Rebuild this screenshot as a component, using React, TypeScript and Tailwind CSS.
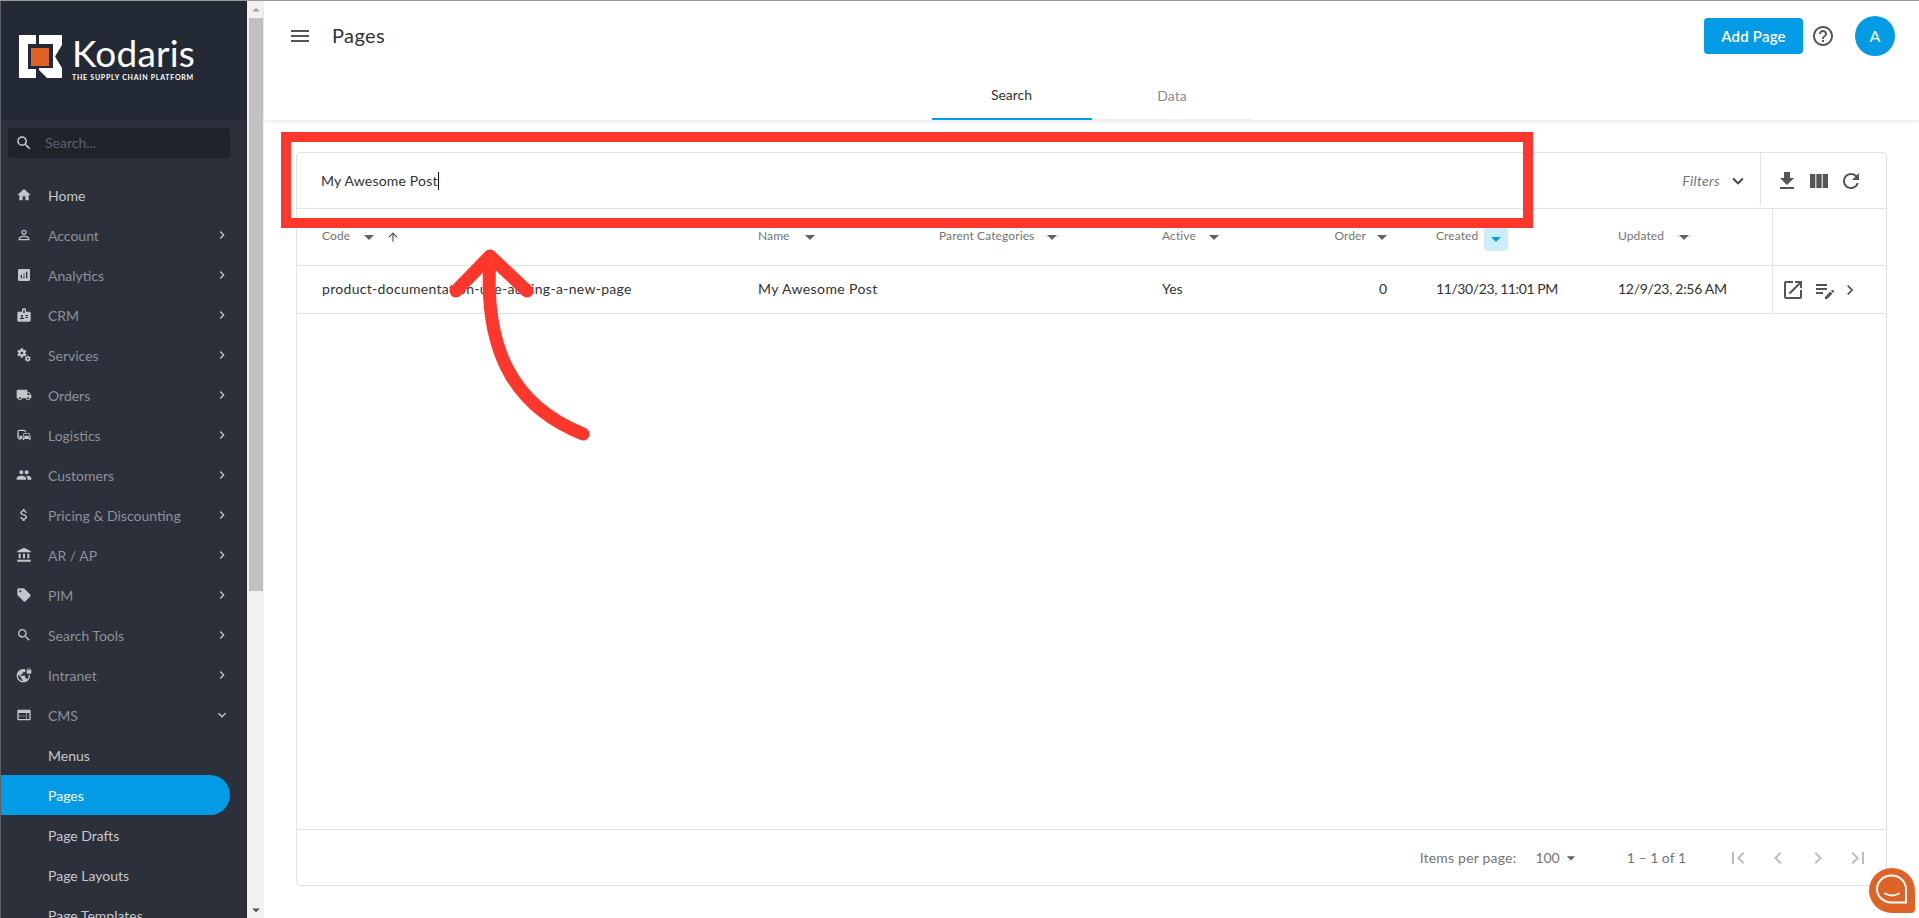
import React from "react";
import {
  MdHome, MdPersonOutline, MdAnalytics, MdBadge, MdMiscellaneousServices, MdLocalShipping, MdCommute, MdPeople,
  MdAttachMoney, MdAccountBalance, MdSell, MdSearch, MdVpnLock, MdWeb, MdChevronRight, MdExpandMore, MdMenu,
  MdHelpOutline, MdFileDownload, MdViewColumn, MdRefresh, MdOpenInNew, MdEditNote, MdArrowUpward, MdArrowDropDown,
  MdFirstPage, MdLastPage, MdChevronLeft, MdArrowDropUp,
} from "react-icons/md";

const items: [string, React.ComponentType<{ size?: number; className?: string }>][] = [
  ["Account", MdPersonOutline],
  ["Analytics", MdAnalytics],
  ["CRM", MdBadge],
  ["Services", MdMiscellaneousServices],
  ["Orders", MdLocalShipping],
  ["Logistics", MdCommute],
  ["Customers", MdPeople],
  ["Pricing & Discounting", MdAttachMoney],
  ["AR / AP", MdAccountBalance],
  ["PIM", MdSell],
  ["Search Tools", MdSearch],
  ["Intranet", MdVpnLock],
];

function Logo() {
  return (
    <div className="flex items-start pl-[18px] pt-[34px] h-[119px] bg-[#242a35] shrink-0">
      <svg width="43" height="43" viewBox="0 0 43 43" className="shrink-0">
        <path d="M0 0H17V9H9V34H17V43H0Z M20 0H43V10L36 21.5L43 33V43H28L20 35V9Z" fill="#fff" />
        <rect x="9" y="9" width="25" height="24" fill="#242a35" />
        <rect x="12" y="13" width="18" height="18" fill="#dd6426" />
      </svg>
      <div className="ml-[10px] flex flex-col text-white">
        <span className="text-[37px] leading-[36px] font-normal tracking-[0.2px]">Kodaris</span>
        <span className="text-[7px] leading-[8px] font-bold tracking-[0.75px] whitespace-nowrap mt-[2px]">THE SUPPLY CHAIN PLATFORM</span>
      </div>
    </div>
  );
}

function NavRow({ label, Icon, open }: { label: string; Icon: React.ComponentType<{ size?: number; className?: string }>; open?: boolean }) {
  return (
    <div className="h-[40px] flex items-center text-[14px] text-[#8d9199]">
      <div className="w-[47px] pl-[15px] shrink-0">
        <Icon size={16} className="text-[#c3c5c9]" />
      </div>
      <span className="flex-1 whitespace-nowrap">{label}</span>
      <div className="pr-[17px]">
        {open ? <MdExpandMore size={16} className="text-[#c3c5c9]" /> : <MdChevronRight size={16} className="text-[#c3c5c9]" />}
      </div>
    </div>
  );
}

function Sidebar() {
  return (
    <aside className="w-[247px] shrink-0 h-full bg-[#2b303b] border-l border-[#5b5f68] overflow-hidden flex flex-col">
      <Logo />
      <div className="ml-[7px] w-[222px] mt-[8px] h-[30px] rounded-[3px] bg-[#1f242c] flex items-center pl-[7px] shrink-0">
        <MdSearch size={18} className="text-[#c9cbce]" />
        <span className="ml-[12px] -mt-[2px] text-[14px] text-[#5d626b]">Search...</span>
      </div>
      <div className="mt-[17px] shrink-0">
        <div className="h-[40px] flex items-center text-[14px] text-[#c6c8cc]">
          <div className="w-[47px] pl-[15px] shrink-0">
            <MdHome size={16} className="text-[#c3c5c9]" />
          </div>
          Home
        </div>
        {items.map(([l, I]) => (
          <NavRow key={l} label={l} Icon={I} />
        ))}
        <NavRow label="CMS" Icon={MdWeb} open />
        <div className="h-[40px] flex items-center pl-[47px] text-[14px] text-[#c6c8cc]">Menus</div>
        <div className="h-[40px] w-[229px] rounded-r-[20px] bg-[#039be5] flex items-center pl-[47px] text-[14px] text-white">Pages</div>
        <div className="h-[40px] flex items-center pl-[47px] text-[14px] text-[#c6c8cc]">Page Drafts</div>
        <div className="h-[40px] flex items-center pl-[47px] text-[14px] text-[#c6c8cc]">Page Layouts</div>
        <div className="h-[40px] flex items-center pl-[47px] text-[14px] text-[#c6c8cc]">Page Templates</div>
      </div>
    </aside>
  );
}

function Scrollbar() {
  return (
    <div className="w-[17px] shrink-0 h-full bg-[#f1f1f1] flex flex-col items-center">
      <div className="h-[17px] flex items-center justify-center"><MdArrowDropUp size={18} className="text-[#a3a3a3]" /></div>
      <div className="w-[14px] h-[573px] bg-[#c1c1c1]" />
      <div className="flex-1" />
      <div className="h-[17px] flex items-center justify-center"><MdArrowDropDown size={18} className="text-[#505050]" /></div>
    </div>
  );
}

function Head({ label, right, gap, children }: { label: string; right?: boolean; gap?: string; children?: React.ReactNode }) {
  return (
    <div className={`flex items-center text-[12px] text-[#757575] tracking-[0.1px] ${right ? "justify-end" : ""}`}>
      <span className="-mt-[2px]">{label}</span>
      {children ?? <MdArrowDropDown size={24} className={`${gap ?? "ml-[8px]"} text-[#616161]`} />}
    </div>
  );
}

const COLS = "grid grid-cols-[461px_181px_223px_138px_136px_182px_154px_1fr]";

function Table() {
  return (
    <>
      <div className={`${COLS} h-[57px] border-b border-[#e3e3e3]`}>
        <div className="pl-[25px] flex"><Head label="Code"><MdArrowDropDown size={24} className="ml-[7px] text-[#616161]" /><MdArrowUpward size={14} className="ml-[5px] text-[#555]" /></Head></div>
        <div className="flex"><Head label="Name" /></div>
        <div className="flex"><Head label="Parent Categories" gap="ml-[6px]" /></div>
        <div className="flex"><Head label="Active" gap="ml-[6px]" /></div>
        <div className="flex justify-end pr-[42px]"><Head label="Order" right gap="ml-[4px]" /></div>
        <div className="flex">
          <Head label="Created">
            <span className="ml-[6px] w-[24px] h-[24px] rounded-[4px] bg-[#cceefc] flex items-center justify-center mt-[3px]">
              <MdArrowDropDown size={24} className="text-[#039be5]" />
            </span>
          </Head>
        </div>
        <div className="flex"><Head label="Updated" /></div>
        <div className="border-l border-[#e3e3e3]" />
      </div>
      <div className={`${COLS} h-[48px] border-b border-[#e3e3e3] text-[14px] text-[#333]`}>
        <div className="pl-[25px] flex items-center whitespace-nowrap tracking-[0.3px] -mt-[2px]">product-documentation-use-adding-a-new-page</div>
        <div className="flex items-center tracking-[0.4px] -mt-[2px]">My Awesome Post</div>
        <div />
        <div className="flex items-center -mt-[2px]">Yes</div>
        <div className="flex items-center justify-end pr-[49px] -mt-[2px]">0</div>
        <div className="flex items-center tracking-[-0.4px] -mt-[2px]">11/30/23, 11:01 PM</div>
        <div className="flex items-center tracking-[-0.3px] -mt-[2px]">12/9/23, 2:56 AM</div>
        <div className="border-l border-[#e3e3e3] flex items-center pl-[8px] text-[#555]">
          <MdOpenInNew size={24} />
          <MdEditNote size={24} className="ml-[8px]" />
          <MdChevronRight size={20} className="ml-[3px]" />
        </div>
      </div>
    </>
  );
}

function Card() {
  return (
    <div className="mt-[32px] ml-[32px] mr-[32px] h-[734px] border border-[#e3e3e3] rounded-[4px] flex flex-col overflow-hidden">
      <div className="h-[56px] border-b border-[#e3e3e3] flex items-stretch shrink-0">
        <div className="flex-1 flex items-center pl-[24px] pr-[11px] border-r border-[#e3e3e3] rounded-br-[4px]">
          <span className="text-[14px] text-[#333] border-r border-[#111] leading-[18px] tracking-[0.2px]">My Awesome Post</span>
          <div className="flex-1" />
          <span className="italic text-[14px] text-[#757575] tracking-[0.3px]">Filters</span>
          <MdExpandMore size={22} className="ml-[7px] text-[#444]" />
        </div>
        <div className="w-[125px] flex items-center pl-[14px] text-[#555] gap-[8px]">
          <MdFileDownload size={24} />
          <MdViewColumn size={24} />
          <MdRefresh size={24} />
        </div>
      </div>
      <Table />
      <div className="flex-1" />
      <div className="h-[56px] border-t border-[#e3e3e3] flex items-center text-[14px] text-[#757575] shrink-0">
        <div className="flex-1" />
        <span className="tracking-[0.2px]">Items per page:</span>
        <span className="ml-[19px]">100</span>
        <MdArrowDropDown size={20} className="ml-[1px] text-[#616161]" />
        <span className="ml-[46px]">1 – 1 of 1</span>
        <div className="ml-[40px] mr-[16px] flex gap-[16px] text-[#bdbdbd]">
          <MdFirstPage size={24} />
          <MdChevronLeft size={24} />
          <MdChevronRight size={24} />
          <MdLastPage size={24} />
        </div>
      </div>
    </div>
  );
}

function Main() {
  return (
    <main className="flex-1 h-full bg-white flex flex-col min-w-0">
      <header className="h-[119px] shrink-0 shadow-[0_2px_4px_rgba(0,0,0,0.08)] flex flex-col">
        <div className="h-[70px] flex items-center pl-[24px] pr-[24px] shrink-0">
          <MdMenu size={24} className="text-[#555]" />
          <span className="ml-[20px] text-[20px] text-[#333] tracking-[0.4px] -mt-[2px]">Pages</span>
          <div className="flex-1" />
          <button className="w-[99px] h-[36px] rounded-[4px] bg-[#039be5] text-white text-[15px] font-semibold tracking-[0.2px]">Add Page</button>
          <MdHelpOutline size={24} className="ml-[8px] text-[#555]" />
          <div className="ml-[20px] w-[40px] h-[40px] rounded-full bg-[#039be5] text-white flex items-center justify-center text-[16px]">A</div>
        </div>
        <div className="flex-1 flex justify-center pl-[1px]">
          <div className="flex w-[321px] border-b border-[#efefef]">
            <div className="w-[160px] border-b-2 -mb-px border-[#039be5] flex items-center justify-center text-[14px] text-[#333]">Search</div>
            <div className="w-[161px] flex items-center justify-center text-[14px] text-[#8a8a8a]">Data</div>
          </div>
        </div>
      </header>
      <Card />
    </main>
  );
}

function Annotation() {
  return (
    <>
      <div className="absolute left-[281px] top-[131px] w-[1252px] h-[96px] border-[10px] border-[#fe372c]" />
      <svg className="absolute left-0 top-[-1px] pointer-events-none" width="1919" height="918" fill="none">
        <path d="M456 291L490 256L527 291" stroke="#fe372c" strokeWidth="13" strokeLinecap="round" strokeLinejoin="round" />
        <path d="M490 258C484 345 510 405 583 434" stroke="#fe372c" strokeWidth="13" strokeLinecap="round" />
      </svg>
    </>
  );
}

function Chat() {
  return (
    <div className="absolute left-[1869px] top-[867px] w-[46px] h-[45px]">
      <svg width="46" height="45" viewBox="0 0 46 45" fill="none">
        <path d="M23 0A23 22.5 0 0 1 46 22.5V41Q46 45 42 45H23A23 22.5 0 0 1 23 0Z" fill="#dd6426" />
        <path d="M22.5 7.5A14.5 13.5 0 0 1 37 21V34.5H22.5A14.5 13.5 0 0 1 22.5 7.5Z" stroke="#fff" strokeWidth="2" />
        <path d="M16 25.5Q23 29.5 30 25.5" stroke="#fff" strokeWidth="2" strokeLinecap="round" />
      </svg>
    </div>
  );
}

export default function App() {
  return (
    <div className="relative w-[1919px] h-[918px] overflow-hidden bg-white border-t border-[#999] flex font-['Lato','Open_Sans',sans-serif]">
      <Sidebar />
      <Scrollbar />
      <Main />
      <Annotation />
      <Chat />
    </div>
  );
}
